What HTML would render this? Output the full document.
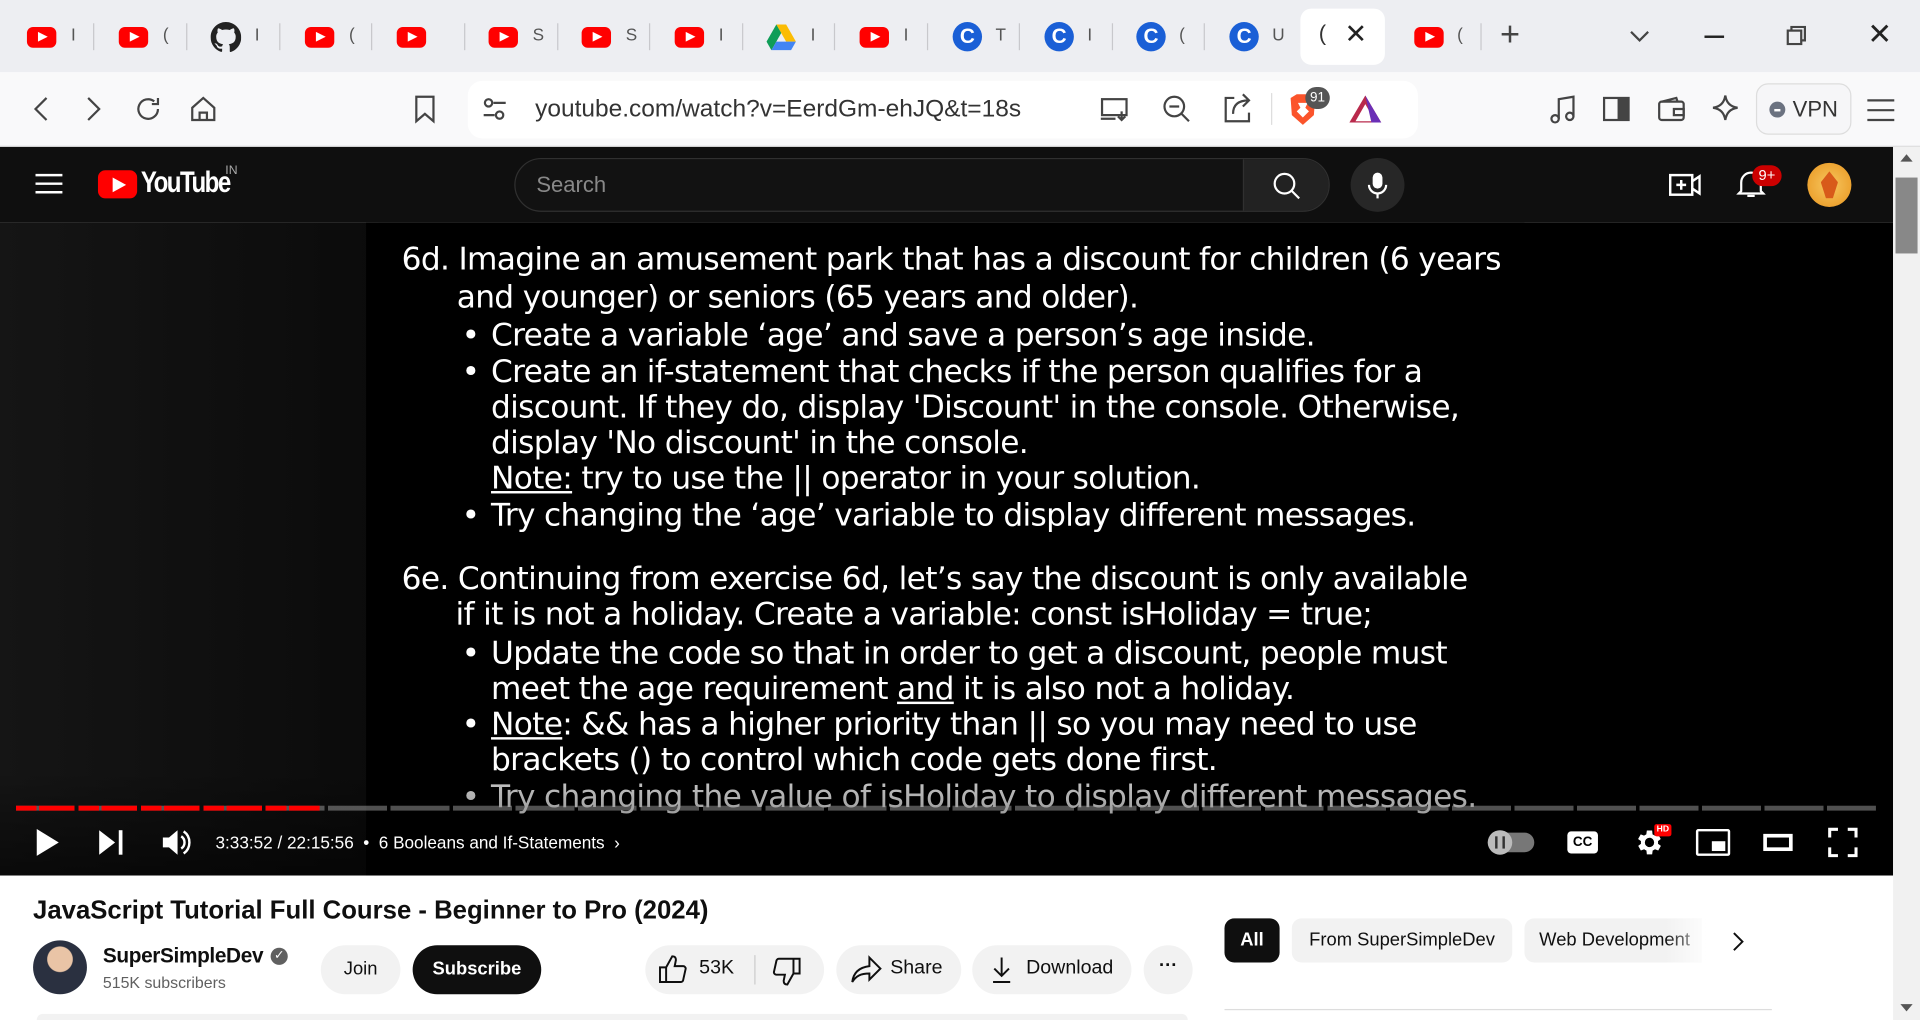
<!DOCTYPE html>
<html><head><meta charset="utf-8"><style>
*{margin:0;padding:0;box-sizing:border-box}
html,body{width:1920px;height:1020px;overflow:hidden;background:#fff}
#w{position:absolute;left:0;top:0;width:1568px;height:833px;transform:scale(1.22449);transform-origin:0 0;font-family:"Liberation Sans",sans-serif;overflow:hidden}
.a{position:absolute}
.tabs{left:0;top:0;width:1568px;height:59px;background:#edeef2}
.yt{width:24px;height:17px;background:#f00;border-radius:5px}
.yt:after{content:"";position:absolute;left:9px;top:4px;border-left:8px solid #fff;border-top:4.5px solid transparent;border-bottom:4.5px solid transparent}
.cg{width:24px;height:24px;border-radius:50%;background:#1a5fd6;color:#fff;font:bold 17px "Liberation Sans";text-align:center;line-height:24px}
.sep{width:1px;height:22px;background:#c8c8cc;top:19px}
.tt{font-size:14px;color:#555;top:20px}
.bar{left:0;top:59px;width:1568px;height:61px;background:#f9f9fa;border-bottom:1px solid #ddd}
.url{left:382px;top:66px;width:776px;height:47px;background:#fff;border-radius:12px}
.ic{stroke:#444;fill:none;stroke-width:1.8}
.yth{left:0;top:120px;width:1546px;height:62px;background:#0f0f0f}
.vid{left:0;top:182px;width:1546px;height:533px;background:linear-gradient(90deg,#151515,#0b0b0b 20%,#000 19.4%)}
.slide{left:299px;top:182px;width:946px;height:533px;background:#000;color:#fff;font-size:25.5px;font-family:"DejaVu Sans","Liberation Sans",sans-serif;letter-spacing:-0.55px}
.slide div{position:absolute;white-space:nowrap;line-height:30px}
.u{text-decoration:underline}
.ctl{color:#fff}
.chip{background:#f2f2f2;border-radius:18px;height:36px;font-size:15px;color:#0f0f0f;line-height:36px;text-align:center}
</style></head><body><div id="w">
<div class="a tabs"></div>
<div class="a yt" style="left:22px;top:22px"></div><div class="a tt" style="left:58px">I</div><div class="a sep" style="left:76px"></div>
<div class="a yt" style="left:97px;top:22px"></div><div class="a tt" style="left:133px">(</div><div class="a sep" style="left:152px"></div>
<svg class="a" style="left:172px;top:18px" width="25" height="25" viewBox="0 0 16 16"><path fill="#222" d="M8 0C3.58 0 0 3.58 0 8c0 3.54 2.290 6.530 5.470 7.590.4.07.55-.17.55-.38v-1.33c-2.230.48-2.700-1.070-2.700-1.070-.36-.92-.89-1.170-.89-1.170-.73-.5.05-.49.05-.49.81.06 1.230.83 1.230.83.72 1.230 1.880.87 2.340.67.07-.52.28-.87.51-1.070-1.780-.2-3.640-.89-3.640-3.950 0-.87.31-1.590.82-2.150-.08-.2-.36-1.020.08-2.120 0 0 .67-.21 2.200.82a7.600 7.600 0 0 1 4 0c1.530-1.040 2.200-.82 2.200-.82.44 1.100.16 1.920.08 2.120.51.56.82 1.270.82 2.150 0 3.070-1.870 3.750-3.650 3.950.29.25.54.73.54 1.480v2.200c0 .21.15.46.55.38A8 8 0 0 0 16 8c0-4.420-3.580-8-8-8z"/></svg><div class="a tt" style="left:208px">I</div><div class="a sep" style="left:228px"></div>
<div class="a yt" style="left:249px;top:22px"></div><div class="a tt" style="left:285px">(</div><div class="a sep" style="left:303px"></div>
<div class="a yt" style="left:324px;top:22px"></div><div class="a sep" style="left:379px"></div>
<div class="a yt" style="left:399px;top:22px"></div><div class="a tt" style="left:435px">S</div><div class="a sep" style="left:455px"></div>
<div class="a yt" style="left:475px;top:22px"></div><div class="a tt" style="left:511px">S</div><div class="a sep" style="left:530px"></div>
<div class="a yt" style="left:551px;top:22px"></div><div class="a tt" style="left:587px">I</div><div class="a sep" style="left:606px"></div>
<svg class="a" style="left:626px;top:20px" width="24" height="21" viewBox="0 0 24 21"><path d="M8 0h8l8 14h-8z" fill="#fbbc04"/><path d="M8 0l4 7-8 14-4-7z" fill="#0f9d58"/><path d="M4 21l4-7h16l-4 7z" fill="#4285f4"/></svg><div class="a tt" style="left:662px">I</div><div class="a sep" style="left:681px"></div>
<div class="a yt" style="left:702px;top:22px"></div><div class="a tt" style="left:738px">I</div><div class="a sep" style="left:757px"></div>
<div class="a cg" style="left:778px;top:18px">C</div><div class="a tt" style="left:813px">T</div><div class="a sep" style="left:832px"></div>
<div class="a cg" style="left:853px;top:18px">C</div><div class="a tt" style="left:888px">I</div><div class="a sep" style="left:908px"></div>
<div class="a cg" style="left:928px;top:18px">C</div><div class="a tt" style="left:963px">(</div><div class="a sep" style="left:983px"></div>
<div class="a cg" style="left:1004px;top:18px">C</div><div class="a tt" style="left:1039px">U</div>
<div class="a" style="left:1062px;top:7px;width:69px;height:46px;background:#fff;border-radius:9px"></div>
<div class="a" style="left:1077px;top:17px;font-size:18px;color:#333">(</div>
<div class="a" style="left:1098px;top:15px;font-size:22px;color:#222">✕</div>
<div class="a yt" style="left:1155px;top:22px"></div><div class="a tt" style="left:1190px">(</div><div class="a sep" style="left:1209px"></div>
<div class="a" style="left:1225px;top:12px;font-size:28px;color:#444">+</div>
<svg class="a" style="left:1330px;top:22px" width="18" height="14"><path d="M2 4l7 7 7-7" class="ic"/></svg>
<div class="a" style="left:1392px;top:29px;width:16px;height:1.5px;background:#222"></div>
<svg class="a" style="left:1459px;top:21px" width="16" height="16"><rect x="1" y="4" width="11" height="11" class="ic" stroke="#222"/><path d="M4 4V1h11v11h-3" class="ic" stroke="#222"/></svg>
<div class="a" style="left:1525px;top:14px;font-size:24px;color:#222">✕</div>

<div class="a bar"></div>
<svg class="a" style="left:24px;top:78px" width="20" height="22"><path d="M14 2L5 11l9 9" class="ic"/></svg>
<svg class="a" style="left:66px;top:78px" width="20" height="22"><path d="M6 2l9 9-9 9" class="ic"/></svg>
<svg class="a" style="left:109px;top:77px" width="24" height="24"><path d="M20 12a8 8 0 1 1-3-6.2M20 3v5h-5" class="ic"/></svg>
<svg class="a" style="left:154px;top:77px" width="24" height="24"><path d="M3 11l9-8 9 8v10H3z M9 21v-6h6v6" class="ic"/></svg>
<svg class="a" style="left:336px;top:77px" width="22" height="24"><path d="M4 2h14v20l-7-6-7 6z" class="ic"/></svg>
<div class="a url"></div>
<svg class="a" style="left:393px;top:79px" width="22" height="20"><circle cx="6" cy="5" r="3" class="ic"/><circle cx="15" cy="15" r="3" class="ic"/><path d="M10 5h10M2 15h9" class="ic"/></svg>
<div class="a" style="left:437px;top:78px;font-size:20px;color:#333">youtube.com/watch?v=EerdGm-ehJQ&amp;t=18s</div>
<svg class="a" style="left:898px;top:77px" width="26" height="24"><rect x="2" y="4" width="20" height="13" class="ic"/><path d="M1 20h12M18 14v7M15 18l3 3 3-3" class="ic"/></svg>
<svg class="a" style="left:948px;top:76px" width="26" height="26"><circle cx="11" cy="11" r="8" class="ic"/><path d="M7 11h8M17 17l6 6" class="ic"/></svg>
<svg class="a" style="left:998px;top:76px" width="26" height="26"><path d="M10 4H3v19h19v-7M9 17c0-8 5-11 13-11M17 1l5 5-5 5" class="ic"/></svg>
<div class="a" style="left:1038px;top:76px;width:1px;height:26px;background:#ddd"></div>
<svg class="a" style="left:1051px;top:76px" width="26" height="28"><path d="M3 4l5-3h10l5 3-1 14-9 8-9-8z" fill="#fb542b"/><path d="M9 8h8l-2 4 3 3-5 5-5-5 3-3z" fill="#fff"/></svg>
<div class="a" style="left:1066px;top:71px;width:20px;height:18px;border-radius:9px;background:#555;color:#fff;font-size:11px;text-align:center;line-height:18px">91</div>
<svg class="a" style="left:1101px;top:77px" width="28" height="24"><path d="M14 1L27 23H1z" fill="#b92a4c"/><path d="M14 8l8 14H6z" fill="#fff"/><path d="M14 1l13 22h-8z" fill="#6b2fb6"/></svg>
<svg class="a" style="left:1264px;top:77px" width="24" height="26"><path d="M9 20V4l12-2v16" class="ic"/><circle cx="6" cy="20" r="3" class="ic"/><circle cx="18" cy="18" r="3" class="ic"/></svg>
<svg class="a" style="left:1308px;top:78px" width="24" height="22"><rect x="2" y="2" width="20" height="18" class="ic"/><rect x="13" y="2" width="9" height="18" fill="#444"/></svg>
<svg class="a" style="left:1353px;top:78px" width="24" height="22"><rect x="2" y="5" width="20" height="15" rx="2" class="ic"/><path d="M4 5l12-3 1 3M14 11h8v5h-8z" class="ic"/></svg>
<svg class="a" style="left:1397px;top:76px" width="26" height="26"><path d="M12 2c1 6 4 9 10 10-6 1-9 4-10 10-1-6-4-9-10-10 6-1 9-4 10-10z" class="ic"/></svg>
<div class="a" style="left:1434px;top:68px;width:78px;height:42px;border:1.5px solid #ddd;border-radius:10px;background:#f6f6f8"></div>
<div class="a" style="left:1445px;top:83px;width:13px;height:13px;border-radius:50%;background:#6b7280"></div>
<div class="a" style="left:1449px;top:89px;width:5px;height:1.5px;background:#fff"></div>
<div class="a" style="left:1464px;top:79px;font-size:18px;color:#333">VPN</div>
<svg class="a" style="left:1524px;top:80px" width="24" height="20"><path d="M1 2h22M1 10h22M1 18h22" class="ic"/></svg>

<div class="a yth"></div>
<svg class="a" style="left:29px;top:141px" width="22" height="18"><path d="M0 2h22M0 9h22M0 16h22" stroke="#fff" stroke-width="2"/></svg>
<div class="a" style="left:80px;top:139px;width:32px;height:23px;background:#f00;border-radius:6px"></div>
<div class="a" style="left:92px;top:145px;border-left:11px solid #fff;border-top:6px solid transparent;border-bottom:6px solid transparent"></div>
<div class="a" style="left:115px;top:136px;font:bold 24px 'Liberation Sans Narrow','Liberation Sans',sans-serif;color:#fff;letter-spacing:-1.5px;transform:scaleX(.82);transform-origin:0 0">YouTube</div>
<div class="a" style="left:184px;top:134px;font-size:10px;color:#aaa">IN</div>
<div class="a" style="left:420px;top:129px;width:666px;height:44px;border:1px solid #303030;border-radius:22px;background:#121212;overflow:hidden"><div class="a" style="left:594px;top:0;width:72px;height:44px;background:#222;border-left:1px solid #303030"></div></div>
<div class="a" style="left:438px;top:141px;font-size:18px;color:#888">Search</div>
<svg class="a" style="left:1038px;top:139px" width="26" height="26"><circle cx="11" cy="11" r="8" fill="none" stroke="#fff" stroke-width="1.8"/><path d="M17 17l6 6" stroke="#fff" stroke-width="1.8"/></svg>
<div class="a" style="left:1103px;top:129px;width:44px;height:44px;border-radius:50%;background:#272727"></div>
<svg class="a" style="left:1115px;top:140px" width="20" height="24"><rect x="6" y="1" width="8" height="13" rx="4" fill="#fff"/><path d="M3 11a7 7 0 0 0 14 0M10 18v4" stroke="#fff" stroke-width="1.8" fill="none"/></svg>
<svg class="a" style="left:1363px;top:140px" width="26" height="22"><rect x="1" y="3" width="18" height="16" fill="none" stroke="#fff" stroke-width="2"/><path d="M10 7v8M6 11h8M19 8l6-4v14l-6-4" stroke="#fff" stroke-width="2" fill="none"/></svg>
<svg class="a" style="left:1418px;top:138px" width="24" height="26"><path d="M4 18V11a8 8 0 0 1 16 0v7l2 2H2z M9 22h6" stroke="#fff" stroke-width="1.8" fill="none"/></svg>
<div class="a" style="left:1431px;top:135px;width:24px;height:17px;border-radius:9px;background:#cc0000;color:#fff;font-size:12px;text-align:center;line-height:17px">9+</div>
<div class="a" style="left:1476px;top:133px;width:36px;height:36px;border-radius:50%;background:radial-gradient(#f7c760,#e8941d);"></div>
<div class="a" style="left:1487px;top:140px;width:14px;height:22px;background:#d85a1a;clip-path:polygon(50% 0,100% 40%,70% 100%,30% 100%,0 40%)"></div>

<div class="a vid"></div>
<div class="a slide">
<div style="left:29px;top:15px">6d. Imagine an amusement park that has a discount for children (6 years</div>
<div style="left:74px;top:46px">and younger) or seniors (65 years and older).</div>
<div style="left:78px;top:77px">•</div><div style="left:102px;top:77px">Create a variable ‘age’ and save a person’s age inside.</div>
<div style="left:78px;top:107px">•</div><div style="left:102px;top:107px">Create an if-statement that checks if the person qualifies for a</div>
<div style="left:102px;top:136px">discount. If they do, display 'Discount' in the console. Otherwise,</div>
<div style="left:102px;top:165px">display 'No discount' in the console.</div>
<div style="left:102px;top:194px"><span class="u">Note:</span> try to use the || operator in your solution.</div>
<div style="left:78px;top:224px">•</div><div style="left:102px;top:224px">Try changing the ‘age’ variable to display different messages.</div>
<div style="left:29px;top:276px">6e. Continuing from exercise 6d, let’s say the discount is only available</div>
<div style="left:73px;top:305px">if it is not a holiday. Create a variable: const isHoliday = true;</div>
<div style="left:78px;top:337px">•</div><div style="left:102px;top:337px">Update the code so that in order to get a discount, people must</div>
<div style="left:102px;top:366px">meet the age requirement <span class="u">and</span> it is also not a holiday.</div>
<div style="left:78px;top:395px">•</div><div style="left:102px;top:395px"><span class="u">Note</span>: &amp;&amp; has a higher priority than || so you may need to use</div>
<div style="left:102px;top:424px">brackets () to control which code gets done first.</div>
<div style="left:78px;top:454px;color:#ccc">•</div><div style="left:102px;top:454px;color:#ccc">Try changing the value of isHoliday to display different messages.</div>
</div>
<div class="a" style="left:0;top:630px;width:1546px;height:85px;background:linear-gradient(rgba(0,0,0,0),rgba(0,0,0,.55))"></div>
<div class="a" style="left:13px;top:658px;width:1519px;height:4px;background:repeating-linear-gradient(90deg,rgba(160,160,160,.5) 0 48px,transparent 48px 51px)"></div>
<div class="a" style="left:13px;top:658px;width:248px;height:4px;background:repeating-linear-gradient(90deg,#f00 0 17px,transparent 17px 19px,#f00 19px 48px,transparent 48px 51px)"></div>
<svg class="a" style="left:28px;top:676px" width="22" height="24"><path d="M2 1l18 11-18 11z" fill="#fff"/></svg>
<svg class="a" style="left:80px;top:677px" width="22" height="22"><path d="M1 1l13 10-13 10z" fill="#fff"/><rect x="17" y="1" width="3" height="20" fill="#fff"/></svg>
<svg class="a" style="left:131px;top:676px" width="26" height="24"><path d="M2 8h5l7-6v20l-7-6H2z" fill="#fff"/><path d="M17 7a6 6 0 0 1 0 10M19 3a11 11 0 0 1 0 18" stroke="#fff" stroke-width="2" fill="none"/></svg>
<div class="a ctl" style="left:176px;top:680px;font-size:14px">3:33:52 / 22:15:56&nbsp; • &nbsp;6 Booleans and If-Statements&nbsp; ›</div>
<div class="a" style="left:1215px;top:680px;width:38px;height:16px;border-radius:8px;background:#777"></div>
<div class="a" style="left:1215px;top:678px;width:20px;height:20px;border-radius:50%;background:#bbb"></div>
<div class="a" style="left:1221px;top:683px;width:8px;height:10px;border-left:2.5px solid #333;border-right:2.5px solid #333"></div>
<div class="a" style="left:1280px;top:679px;width:25px;height:18px;border-radius:3px;background:#fff;color:#000;font:bold 11px 'Liberation Sans';text-align:center;line-height:18px">CC</div>
<svg class="a" style="left:1333px;top:675px" width="26" height="26" viewBox="0 0 24 24"><path fill="#fff" d="M19.4 13a7.5 7.5 0 0 0 0-2l2.1-1.6-2-3.5-2.5 1a7 7 0 0 0-1.7-1L15 3h-4l-.4 2.9a7 7 0 0 0-1.7 1l-2.5-1-2 3.5L6.6 11a7.5 7.5 0 0 0 0 2l-2.1 1.6 2 3.5 2.5-1a7 7 0 0 0 1.7 1L11 21h4l.4-2.9a7 7 0 0 0 1.7-1l2.5 1 2-3.5zM13 15.5a3.5 3.5 0 1 1 0-7 3.5 3.5 0 0 1 0 7z"/></svg>
<div class="a" style="left:1351px;top:673px;width:14px;height:10px;background:#f00;color:#fff;font:bold 7px 'Liberation Sans';text-align:center;line-height:10px;border-radius:2px">HD</div>
<div class="a" style="left:1385px;top:677px;width:28px;height:22px;border:2.5px solid #fff;border-radius:2px"><div class="a" style="left:11px;top:8px;width:11px;height:8px;background:#fff"></div></div>
<div class="a" style="left:1440px;top:681px;width:24px;height:14px;border:3px solid #fff"></div>
<svg class="a" style="left:1493px;top:676px" width="24" height="24"><path d="M1 8V1h7M16 1h7v7M23 16v7h-7M8 23H1v-7" stroke="#fff" stroke-width="3" fill="none"/></svg>

<div class="a" style="left:1546px;top:120px;width:22px;height:713px;background:#f1f1f1"></div>
<div class="a" style="left:1552px;top:126px;border-bottom:6px solid #555;border-left:5px solid transparent;border-right:5px solid transparent"></div>
<div class="a" style="left:1548px;top:145px;width:18px;height:62px;background:#888"></div>
<div class="a" style="left:1552px;top:820px;border-top:6px solid #555;border-left:5px solid transparent;border-right:5px solid transparent"></div>

<div class="a" style="left:27px;top:732px;font:bold 21px 'Liberation Sans';color:#0f0f0f">JavaScript Tutorial Full Course - Beginner to Pro (2024)</div>
<div class="a" style="left:27px;top:768px;width:44px;height:44px;border-radius:50%;background:radial-gradient(circle at 50% 35%,#e9c4a6 0 28%,#2a3040 30%);"></div>
<div class="a" style="left:84px;top:771px;font:bold 17px 'Liberation Sans';color:#0f0f0f;letter-spacing:-0.3px">SuperSimpleDev</div>
<div class="a" style="left:221px;top:774px;width:14px;height:14px;border-radius:50%;background:#606060;color:#fff;font-size:10px;text-align:center;line-height:14px">✓</div>
<div class="a" style="left:84px;top:795px;font-size:13px;color:#606060">515K subscribers</div>
<div class="a chip" style="left:262px;top:772px;width:65px;height:40px;line-height:40px;border-radius:20px">Join</div>
<div class="a chip" style="left:337px;top:772px;width:105px;height:40px;line-height:40px;border-radius:20px;background:#0f0f0f;color:#fff;font-weight:bold">Subscribe</div>
<div class="a chip" style="left:527px;top:772px;width:146px;height:40px;border-radius:20px"></div>
<div class="a" style="left:616px;top:780px;width:1px;height:24px;background:#ccc"></div>
<svg class="a" style="left:537px;top:779px" width="26" height="26"><path d="M2 11h5v12H2zM7 11l5-9c2 0 3 1 3 3l-1 5h7c1 0 2 1 2 2l-2 9c0 1-1 2-2 2H7" stroke="#0f0f0f" stroke-width="1.6" fill="none"/></svg>
<div class="a" style="left:571px;top:782px;font-size:16px;color:#0f0f0f">53K</div>
<svg class="a" style="left:629px;top:781px" width="26" height="26"><path d="M24 14h-5V2h5zM19 14l-5 9c-2 0-3-1-3-3l1-5H5c-1 0-2-1-2-2l2-9c0-1 1-2 2-2h12" stroke="#0f0f0f" stroke-width="1.6" fill="none"/></svg>
<div class="a chip" style="left:683px;top:772px;width:102px;height:40px;border-radius:20px"></div>
<svg class="a" style="left:695px;top:780px" width="26" height="24"><path d="M15 2l9 9-9 9v-5C8 15 4 17 1 22c1-8 6-12 14-13z" stroke="#0f0f0f" stroke-width="1.6" fill="none"/></svg>
<div class="a" style="left:727px;top:782px;font-size:16px;color:#0f0f0f">Share</div>
<div class="a chip" style="left:794px;top:772px;width:130px;height:40px;border-radius:20px"></div>
<svg class="a" style="left:808px;top:780px" width="20" height="24"><path d="M10 2v15M4 11l6 6 6-6M3 22h14" stroke="#0f0f0f" stroke-width="1.6" fill="none"/></svg>
<div class="a" style="left:838px;top:782px;font-size:16px;color:#0f0f0f">Download</div>
<div class="a chip" style="left:934px;top:772px;width:40px;height:40px;border-radius:20px;font-weight:bold;line-height:34px">···</div>
<div class="a chip" style="left:1000px;top:750px;width:45px;height:36px;border-radius:8px;background:#0f0f0f;color:#fff;font-weight:bold;line-height:36px">All</div>
<div class="a chip" style="left:1055px;top:750px;width:180px;border-radius:8px">From SuperSimpleDev</div>
<div class="a chip" style="left:1245px;top:750px;width:145px;border-radius:8px 0 0 8px;text-align:left;padding-left:12px;overflow:hidden;white-space:nowrap">Web Development</div>
<div class="a" style="left:1360px;top:750px;width:40px;height:36px;background:linear-gradient(90deg,rgba(255,255,255,0),#fff)"></div>
<svg class="a" style="left:1413px;top:760px" width="14" height="18"><path d="M3 2l7 7-7 7" stroke="#0f0f0f" stroke-width="1.6" fill="none"/></svg>
<div class="a" style="left:1000px;top:824px;width:447px;height:1px;background:#ddd"></div>
<div class="a" style="left:30px;top:828px;width:940px;height:10px;border-radius:8px;background:#f2f2f2"></div>
</div></body></html>
